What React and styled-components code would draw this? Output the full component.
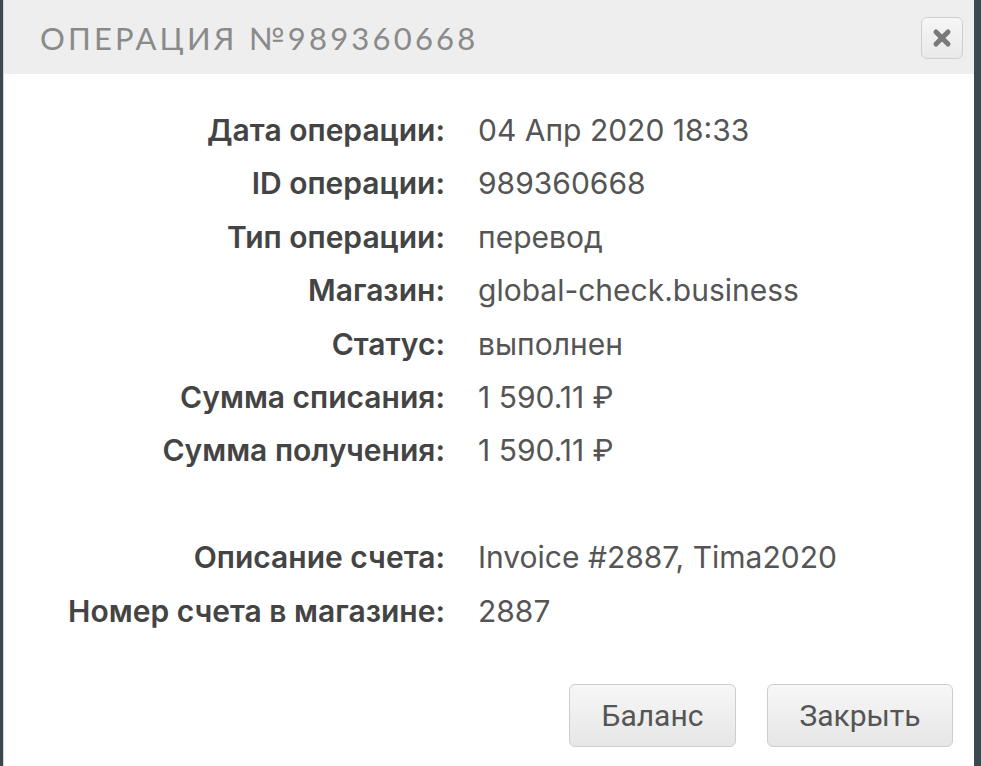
import React from "react";
import styled, { createGlobalStyle } from "styled-components";

const Global = createGlobalStyle`
  html, body { margin: 0; padding: 0; height: 100%; background: #3a4950; }
  #root { height: 100%; }
`;

const Frame = styled.div`
  display: flex;
  height: 766px;
  padding: 0 7px 0 3px;
  box-sizing: border-box;
`;

const Modal = styled.div`
  flex: 1;
  background: #fff;
  border-left: 1px solid #d6d6d6;
  display: flex;
  flex-direction: column;
`;

const Header = styled.div`
  height: 74px;
  background: #eeeeee;
  display: flex;
  align-items: center;
  justify-content: space-between;
  padding: 0 11px 0 36px;
  flex-shrink: 0;
`;

const Title = styled.h1`
  margin: 0;
  font-family: "Lato", "Noto Sans", sans-serif;
  font-weight: 400;
  font-size: 31px;
  letter-spacing: 3.2px;
  color: #8a8a8a;
  text-transform: uppercase;
  padding-top: 2px;
`;

const CloseBtn = styled.button`
  width: 42px;
  height: 42px;
  border: 1px solid #cfcfcf;
  border-radius: 6px;
  background: linear-gradient(#f6f6f6, #e9e9e9);
  display: flex;
  align-items: center;
  justify-content: center;
  padding: 0;
  margin-top: 1px;
`;

const Body = styled.div`
  flex: 1;
  display: flex;
  flex-direction: column;
  padding-top: 30px;
`;

const Grid = styled.div`
  display: grid;
  grid-template-columns: 441px 1fr;
  column-gap: 33px;
  font-family: "Inter", "Roboto", sans-serif;
  font-size: 30px;
  line-height: 53.4px;
`;

const Label = styled.div`
  text-align: right;
  font-weight: 600;
  color: #444;
`;

const Value = styled.div`
  color: #555;
  font-weight: 400;
`;

const Spacer = styled.div`
  grid-column: 1 / span 2;
  height: 53.4px;
`;

const Footer = styled.div`
  display: flex;
  justify-content: flex-end;
  gap: 31px;
  padding: 0 21px 19px 0;
  margin-top: auto;
`;

const Button = styled.button`
  height: 63px;
  width: ${(p) => p.$w}px;
  border: 1px solid #cdcdcd;
  border-radius: 6px;
  background: linear-gradient(#f7f7f7, #e6e6e6);
  font-family: "Roboto", "Liberation Sans", sans-serif;
  font-size: 30px;
  color: #555;
  padding: 0;
`;

const rows = [
  ["Дата операции:", "04 Апр 2020 18:33"],
  ["ID операции:", "989360668"],
  ["Тип операции:", "перевод"],
  ["Магазин:", "global-check.business"],
  ["Статус:", "выполнен"],
  ["Сумма списания:", "1 590.11 ₽"],
  ["Сумма получения:", "1 590.11 ₽"],
];

const rows2 = [
  ["Описание счета:", "Invoice #2887, Tima2020"],
  ["Номер счета в магазине:", "2887"],
];

export default function App() {
  return (
    <>
      <Global />
      <Frame>
        <Modal>
          <Header>
            <Title>Операция №989360668</Title>
            <CloseBtn aria-label="close">
              <svg width="20" height="20" viewBox="0 0 20 20">
                <path d="M4 4 L16 16 M16 4 L4 16" stroke="#7a7a7a" strokeWidth="5" strokeLinecap="round" />
              </svg>
            </CloseBtn>
          </Header>
          <Body>
            <Grid>
              {rows.map(([l, v]) => (
                <React.Fragment key={l}>
                  <Label>{l}</Label>
                  <Value>{v}</Value>
                </React.Fragment>
              ))}
              <Spacer />
              {rows2.map(([l, v]) => (
                <React.Fragment key={l}>
                  <Label>{l}</Label>
                  <Value>{v}</Value>
                </React.Fragment>
              ))}
            </Grid>
            <Footer>
              <Button $w={167}>Баланс</Button>
              <Button $w={186}>Закрыть</Button>
            </Footer>
          </Body>
        </Modal>
      </Frame>
    </>
  );
}
